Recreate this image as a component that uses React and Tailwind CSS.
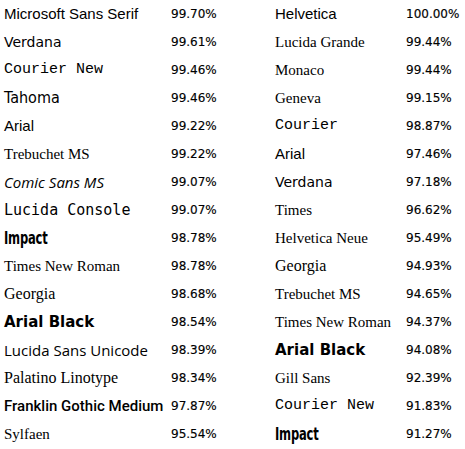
import React from "react";

const SANS = "font-['Liberation_Sans',Arial,sans-serif] text-[15px]";
const SERIF = "font-['Liberation_Serif','Times_New_Roman',serif] text-[15px]";
const MONO = "font-['Liberation_Mono','Courier_New',monospace] text-[15px]";
const VERDANA = "font-['DejaVu_Sans',Verdana,sans-serif] text-[14px]";
const TAHOMA = "font-['DejaVu_Sans_Condensed','DejaVu_Sans',sans-serif] text-[16px]";
const CONSOLE = "font-['DejaVu_Sans_Mono',monospace] text-[15px]";
const IMPACT = "font-['DejaVu_Sans',sans-serif] font-bold text-[17px]";
const BLACK = "font-['DejaVu_Sans',sans-serif] font-bold text-[15px]";
const GEORGIA = "font-['Liberation_Serif',serif] text-[16px]";
const COMIC = "font-['Open_Sans',sans-serif] italic text-[15px]";
const LUCIDA = "font-['Open_Sans',sans-serif] text-[15px]";
const PALATINO = "font-['Liberation_Serif',serif] text-[16px]";
const FRANKLIN = "font-['Roboto',sans-serif] font-medium text-[15px]";

const left = [
  ["Microsoft Sans Serif", SANS, "99.70%"],
  ["Verdana", VERDANA, "99.61%"],
  ["Courier New", MONO, "99.46%"],
  ["Tahoma", TAHOMA, "99.46%"],
  ["Arial", SANS, "99.22%"],
  ["Trebuchet MS", SERIF, "99.22%"],
  ["Comic Sans MS", COMIC, "99.07%"],
  ["Lucida Console", CONSOLE, "99.07%"],
  ["Impact", IMPACT, "98.78%", true],
  ["Times New Roman", SERIF, "98.78%"],
  ["Georgia", GEORGIA, "98.68%"],
  ["Arial Black", BLACK, "98.54%"],
  ["Lucida Sans Unicode", LUCIDA, "98.39%"],
  ["Palatino Linotype", PALATINO, "98.34%"],
  ["Franklin Gothic Medium", FRANKLIN, "97.87%"],
  ["Sylfaen", SERIF, "95.54%"],
];

const right = [
  ["Helvetica", SANS, "100.00%"],
  ["Lucida Grande", SERIF, "99.44%"],
  ["Monaco", SERIF, "99.44%"],
  ["Geneva", SERIF, "99.15%"],
  ["Courier", MONO, "98.87%"],
  ["Arial", SANS, "97.46%"],
  ["Verdana", VERDANA, "97.18%"],
  ["Times", SERIF, "96.62%"],
  ["Helvetica Neue", SERIF, "95.49%"],
  ["Georgia", GEORGIA, "94.93%"],
  ["Trebuchet MS", SERIF, "94.65%"],
  ["Times New Roman", SERIF, "94.37%"],
  ["Arial Black", BLACK, "94.08%"],
  ["Gill Sans", SERIF, "92.39%"],
  ["Courier New", MONO, "91.83%"],
  ["Impact", IMPACT, "91.27%", true],
];

function Pct({ v }) {
  return (
    <span className="font-['DejaVu_Sans',Tahoma,sans-serif] text-[12px] leading-[24px] text-black whitespace-nowrap [-webkit-text-stroke:0.15px_black]">
      {v}
    </span>
  );
}

function Name({ item }) {
  if (item[3]) {
    return (
      <span className="inline-block origin-left scale-x-[0.68] tracking-[-0.3px]">{item[0]}</span>
    );
  }
  return item[0];
}

export default function App() {
  return (
    <div className="w-[465px] h-[449px] bg-white text-black overflow-hidden">
      {left.map((l, i) => {
        const r = right[i];
        return (
          <div key={i} className="flex h-[28px] items-start">
            <div className={`w-[171px] pl-[4px] leading-[28px] whitespace-nowrap ${l[1]}`}>
              <Name item={l} />
            </div>
            <div className="w-[104px]">
              <Pct v={l[2]} />
            </div>
            <div className={`w-[131px] leading-[28px] whitespace-nowrap ${r[1]}`}>
              <Name item={r} />
            </div>
            <div className="flex-1">
              <Pct v={r[2]} />
            </div>
          </div>
        );
      })}
    </div>
  );
}
